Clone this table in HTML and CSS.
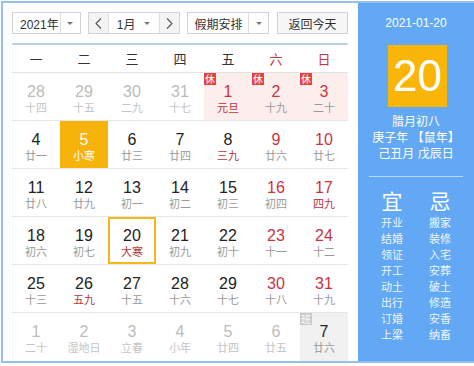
FILE: index.html
```html
<!DOCTYPE html>
<html lang="zh">
<head>
<meta charset="utf-8">
<link rel="stylesheet" href="styles.css">
</head>
<body>
<div class="cal">
  <div class="main">
    <div class="toolbar">
      <div class="ctl year"><span class="val">2021年</span><span class="dd"><i class="tri"></i></span></div>
      <div class="ctl month">
        <span class="nav"><svg width="7" height="11" viewBox="0 0 7 11"><path d="M6 0.5 L1 5.5 L6 10.5" fill="none" stroke="#555" stroke-width="1.1"/></svg></span>
        <span class="mid"><span class="val">1月</span><i class="tri"></i></span>
        <span class="nav"><svg width="7" height="11" viewBox="0 0 7 11"><path d="M1 0.5 L6 5.5 L1 10.5" fill="none" stroke="#555" stroke-width="1.1"/></svg></span>
      </div>
      <div class="ctl hol-sel"><span class="val">假期安排</span><span class="dd"><i class="tri"></i></span></div>
      <div class="ctl btn">返回今天</div>
    </div>
    <div class="week">
      <span>一</span><span>二</span><span>三</span><span>四</span><span>五</span><span class="red">六</span><span class="red">日</span>
    </div>
    <div class="grid">
      <div class="day other"><span class="n">28</span><span class="l">十四</span></div>
      <div class="day other"><span class="n">29</span><span class="l">十五</span></div>
      <div class="day other"><span class="n">30</span><span class="l">二九</span></div>
      <div class="day other"><span class="n">31</span><span class="l">十七</span></div>
      <div class="day hol we"><i class="mark">休</i><span class="n">1</span><span class="l fest">元旦</span></div>
      <div class="day hol we"><i class="mark">休</i><span class="n">2</span><span class="l">十九</span></div>
      <div class="day hol we"><i class="mark">休</i><span class="n">3</span><span class="l">二十</span></div>

      <div class="day"><span class="n">4</span><span class="l">廿一</span></div>
      <div class="day today"><span class="n">5</span><span class="l">小寒</span></div>
      <div class="day"><span class="n">6</span><span class="l">廿三</span></div>
      <div class="day"><span class="n">7</span><span class="l">廿四</span></div>
      <div class="day"><span class="n">8</span><span class="l fest">三九</span></div>
      <div class="day we"><span class="n">9</span><span class="l">廿六</span></div>
      <div class="day we"><span class="n">10</span><span class="l">廿七</span></div>

      <div class="day"><span class="n">11</span><span class="l">廿八</span></div>
      <div class="day"><span class="n">12</span><span class="l">廿九</span></div>
      <div class="day"><span class="n">13</span><span class="l">初一</span></div>
      <div class="day"><span class="n">14</span><span class="l">初二</span></div>
      <div class="day"><span class="n">15</span><span class="l">初三</span></div>
      <div class="day we"><span class="n">16</span><span class="l">初四</span></div>
      <div class="day we"><span class="n">17</span><span class="l fest">四九</span></div>

      <div class="day"><span class="n">18</span><span class="l">初六</span></div>
      <div class="day"><span class="n">19</span><span class="l">初七</span></div>
      <div class="day sel"><span class="n">20</span><span class="l fest">大寒</span></div>
      <div class="day"><span class="n">21</span><span class="l">初九</span></div>
      <div class="day"><span class="n">22</span><span class="l">初十</span></div>
      <div class="day we"><span class="n">23</span><span class="l">十一</span></div>
      <div class="day we"><span class="n">24</span><span class="l">十二</span></div>

      <div class="day"><span class="n">25</span><span class="l">十三</span></div>
      <div class="day"><span class="n">26</span><span class="l fest">五九</span></div>
      <div class="day"><span class="n">27</span><span class="l">十五</span></div>
      <div class="day"><span class="n">28</span><span class="l">十六</span></div>
      <div class="day"><span class="n">29</span><span class="l">十七</span></div>
      <div class="day we"><span class="n">30</span><span class="l">十八</span></div>
      <div class="day we"><span class="n">31</span><span class="l">十九</span></div>

      <div class="day other last"><span class="n">1</span><span class="l">二十</span></div>
      <div class="day other last"><span class="n">2</span><span class="l">湿地日</span></div>
      <div class="day other last"><span class="n">3</span><span class="l">立春</span></div>
      <div class="day other last"><span class="n">4</span><span class="l">小年</span></div>
      <div class="day other last"><span class="n">5</span><span class="l">廿四</span></div>
      <div class="day other last"><span class="n">6</span><span class="l">廿五</span></div>
      <div class="day work last"><i class="mark grey">班</i><span class="n">7</span><span class="l">廿六</span></div>
    </div>
  </div>
  <aside class="side">
    <div class="date">2021-01-20</div>
    <div class="big">20</div>
    <div class="lunar">
      <div>腊月初八</div>
      <div>庚子年 【鼠年】</div>
      <div>己丑月 戊辰日</div>
    </div>
    <div class="sep"></div>
    <div class="yj">
      <div class="col">
        <div class="head">宜</div>
        <div>开业</div><div>结婚</div><div>领证</div><div>开工</div><div>动土</div><div>出行</div><div>订婚</div><div>上梁</div>
      </div>
      <div class="col">
        <div class="head">忌</div>
        <div>搬家</div><div>装修</div><div>入宅</div><div>安葬</div><div>破土</div><div>修造</div><div>安香</div><div>纳畜</div>
      </div>
    </div>
  </aside>
</div>
</body>
</html>
```

FILE: styles.css
```css
html, body {
  margin: 0;
  padding: 0;
  background: #fff;
  overflow: hidden;
}
body {
  font-family: "Liberation Sans", "Noto Sans CJK SC", sans-serif;
  color: #222;
}
.cal {
  margin: 1px 0 0 1px;
  border: 2px solid #94c0ef;
  border-right: none;
  height: 358px;
  display: flex;
  box-sizing: content-box;
}
.main {
  width: 336px;
  padding: 9px 10px 0 9px;
  flex: none;
}
.toolbar {
  display: flex;
  height: 22px;
  font-size: 12px;
  color: #333;
}
.ctl {
  box-sizing: border-box;
  height: 22px;
  border: 1px solid #d3d3d3;
  background: #fff;
  display: flex;
  align-items: center;
}
.year { width: 69px; }
.year .val { flex: 1; padding-left: 7px; }
.dd {
  width: 19px;
  height: 100%;
  border-left: 1px solid #dedede;
  display: flex;
  align-items: center;
  justify-content: center;
}
.tri {
  width: 0;
  height: 0;
  border-left: 3px solid transparent;
  border-right: 3px solid transparent;
  border-top: 3px solid #777;
}
.month { width: 93px; margin-left: 7px; }
.nav {
  width: 19px;
  height: 100%;
  background: #f4f4f4;
  display: flex;
  align-items: center;
  justify-content: center;
}
.nav svg { display: block; }
.mid {
  flex: 1;
  height: 100%;
  border-left: 1px solid #dedede;
  border-right: 1px solid #dedede;
  display: flex;
  align-items: center;
  padding: 0 9px 0 8px;
}
.mid .val { flex: 1; }
.hol-sel { width: 82px; margin-left: 7px; }
.hol-sel .val { flex: 1; padding-left: 6px; }
.btn {
  width: 71px;
  margin-left: 8px;
  justify-content: center;
  background: #f7f7f7;
}
.week {
  margin-top: 9px;
  border-top: 2px solid #bcd3e4;
  border-bottom: 1px solid #e2e2e2;
  height: 27px;
  display: grid;
  grid-template-columns: repeat(7, 48px);
  align-items: center;
  font-size: 13px;
  color: #333;
  font-family: "Noto Sans CJK SC", sans-serif;
}
.week span { text-align: center; }
.week .red { color: #c9353f; }
.grid {
  display: grid;
  grid-template-columns: repeat(7, 48px);
  grid-auto-rows: 48px;
}
.day {
  position: relative;
  box-sizing: border-box;
  border-bottom: 1px solid #e6e6e6;
  display: flex;
  flex-direction: column;
  align-items: center;
  padding-top: 10px;
}
.day.last { border-bottom: none; }
.n {
  font-size: 16px;
  line-height: 18px;
  color: #222;
}
.l {
  font-size: 11px;
  line-height: 13px;
  color: #999;
  font-family: "Noto Sans CJK SC", sans-serif;
}
.we .n { color: #c9353f; }
.l.fest { color: #b8343a; }
.other .n { color: #bcbcbc; }
.other .l { color: #c4c4c4; }
.hol { background: #fdeeee; }
.today { background: #f8b30a; }
.today .n, .today .l { color: #fff; }
.sel { box-shadow: inset 0 0 0 2px #f5b81a; }
.work { background: #f1f1f1; }
.mark {
  position: absolute;
  left: 0;
  top: 0;
  width: 12px;
  height: 12px;
  background: #e0443c;
  color: #fff;
  font-style: normal;
  font-size: 10px;
  line-height: 12px;
  text-align: center;
  font-family: "Noto Sans CJK SC", sans-serif;
}
.mark.grey { background: #c9c9c9; }
.side {
  flex: 1;
  background: #62a8f4;
  color: #fff;
  display: flex;
  flex-direction: column;
  align-items: center;
  padding-top: 12px;
  font-family: "Liberation Sans", "Noto Sans CJK SC", sans-serif;
}
.date {
  font-size: 12px;
  line-height: 16px;
}
.big {
  margin-top: 14px;
  width: 59px;
  height: 62px;
  background: #f9b508;
  font-size: 44px;
  line-height: 62px;
  text-align: center;
  margin-left: 3px;
}
.lunar {
  margin-top: 7px;
  font-size: 12px;
  line-height: 16px;
  text-align: center;
}
.sep {
  margin-top: 14px;
  width: 94px;
  height: 1px;
  background: rgba(255, 255, 255, 0.55);
}
.yj {
  margin-top: 12px;
  display: flex;
  gap: 8px;
}
.col {
  width: 40px;
  text-align: center;
  font-size: 11px;
  line-height: 16px;
  color: rgba(255, 255, 255, 0.92);
}
.col .head {
  font-size: 21px;
  line-height: 26px;
  color: #fff;
}
```
